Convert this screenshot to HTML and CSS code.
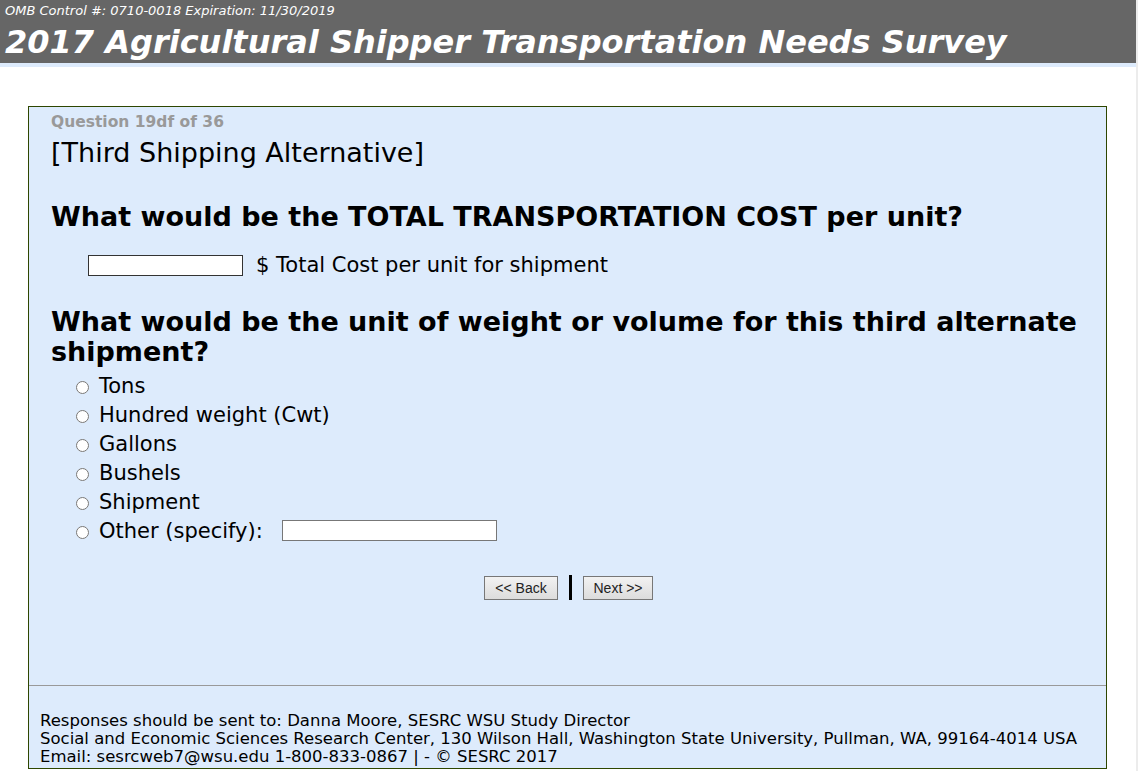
FILE: index.html
```html
<!DOCTYPE html>
<html lang="en">

<head>
    <meta charset="UTF-8">
    <meta name="viewport" content="width=device-width, initial-scale=1.0">
    <title>2017 Agricultural Shipper Transportation Needs Survey</title>
    <link rel="stylesheet" href="styles.css">
</head>

<body>
    <div class="wrap">
        <div class="header">
            <div class="omb">OMB Control #: 0710-0018 Expiration: 11/30/2019</div>
            <h1 class="title">2017 Agricultural Shipper Transportation Needs Survey</h1>
        </div>

        <div class="page">
            <div class="survey">
                <div class="content">
                    <div class="qnum">Question 19df of 36</div>
                    <div class="section">[Third Shipping Alternative]</div>

                    <h2 class="question">What would be the TOTAL TRANSPORTATION COST per unit?</h2>
                    <div class="cost">
                        <input type="text" class="box-cost">
                        <span>$ Total Cost per unit for shipment</span>
                    </div>

                    <h2 class="question q2">What would be the unit of weight or volume for this third alternate shipment?</h2>
                    <ul class="options">
                        <li><input type="radio" name="unit"> <span>Tons</span></li>
                        <li><input type="radio" name="unit"> <span>Hundred weight (Cwt)</span></li>
                        <li><input type="radio" name="unit"> <span>Gallons</span></li>
                        <li><input type="radio" name="unit"> <span>Bushels</span></li>
                        <li><input type="radio" name="unit"> <span>Shipment</span></li>
                        <li><input type="radio" name="unit"> <span>Other (specify):</span>
                            <input type="text" class="box-other"></li>
                    </ul>

                    <div class="nav">
                        <button class="btn back">&lt;&lt; Back</button>
                        <span class="bar"></span>
                        <button class="btn next">Next &gt;&gt;</button>
                    </div>
                </div>

                <div class="footer">
                    Responses should be sent to: Danna Moore, SESRC WSU Study Director<br />
                    Social and Economic Sciences Research Center, 130 Wilson Hall, Washington State University, Pullman, WA, 99164-4014 USA<br />
                    Email: sesrcweb7@wsu.edu 1-800-833-0867 | - &copy; SESRC 2017
                </div>
            </div>
        </div>
    </div>
</body>

</html>
```

FILE: styles.css
```css
* {
    padding: 0;
    margin: 0;
    box-sizing: border-box;
}

html,
body {
    height: 100%;
    overflow: hidden;
    background-color: #fff;
}

body {
    font-family: "DejaVu Sans", Verdana, sans-serif;
    color: #000;
}

.wrap {
    width: 1138px;
    height: 771px;
    border-right: 2px solid #ececec;
}

.header {
    height: 67px;
    background-color: #666;
    border-bottom: 4px solid #ddebfc;
    color: #fff;
    padding-left: 5px;
}

.omb {
    font-size: 13px;
    font-style: italic;
    line-height: 15px;
    padding-top: 3px;
}

.title {
    font-size: 32px;
    font-style: italic;
    font-weight: bold;
    line-height: 40px;
    margin-top: 4px;
    white-space: nowrap;
}

.page {
    padding: 39px 29px 0 28px;
}

.survey {
    height: 663px;
    border: 1px solid #2e4600;
    background-color: #ddebfc;
    display: flex;
    flex-direction: column;
}

.content {
    flex: 1;
    padding: 5px 20px 0 22px;
}

.qnum {
    font-size: 15.5px;
    font-weight: bold;
    color: #999;
    line-height: 20px;
}

.section {
    font-size: 27px;
    line-height: 32px;
    margin-top: 5px;
}

.question {
    font-size: 27px;
    font-weight: bold;
    line-height: 30px;
    margin-top: 33px;
}

.q2 {
    margin-top: 30px;
}

.cost {
    display: flex;
    align-items: center;
    gap: 13px;
    font-size: 21px;
    margin: 21px 0 0 37px;
}

input[type=text] {
    height: 21px;
    border: 1px solid #333;
    background-color: #fff;
}

.box-cost {
    width: 155px;
}

.options {
    list-style: none;
    margin: 4px 0 0 24px;
    font-size: 21px;
}

.options li {
    display: flex;
    align-items: center;
    height: 29px;
}

.options input[type=radio] {
    width: 13px;
    height: 13px;
    margin: 4px 10px 0 1px;
}

.box-other {
    width: 215px;
    border-color: #777 !important;
    margin-left: 19px;
}

.nav {
    display: flex;
    justify-content: center;
    align-items: center;
    gap: 11px;
    margin-top: 30px;
}

.btn {
    height: 24px;
    padding: 0 6px;
    font-family: "Liberation Sans", Arial, sans-serif;
    font-size: 14px;
    color: #222;
    border: 1px solid #777;
    background: linear-gradient(#f2f2f2, #dcdcdc);
}

.back {
    width: 74px;
}

.next {
    width: 70px;
}

.bar {
    width: 3px;
    height: 25px;
    background-color: #000;
}

.footer {
    height: 83px;
    border-top: 1px solid #999;
    padding: 26px 0 0 11px;
    font-size: 16.5px;
    line-height: 18px;
    white-space: nowrap;
}
```
